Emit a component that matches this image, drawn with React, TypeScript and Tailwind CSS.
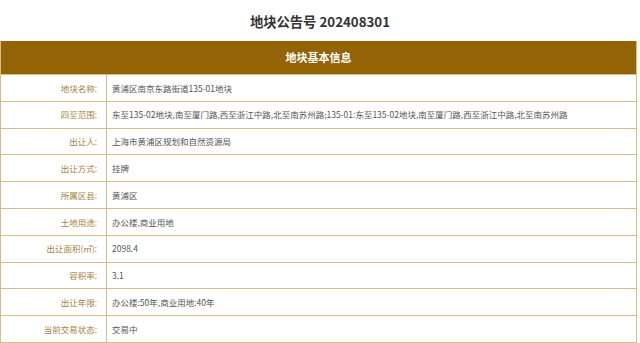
import React from 'react';

const ROWS: { label: string; value: string }[] = [
  { label: '地块名称:', value: '黄浦区南京东路街道135-01地块' },
  {
    label: '四至范围:',
    value:
      '东至135-02地块,南至厦门路,西至浙江中路,北至南苏州路;135-01:东至135-02地块,南至厦门路,西至浙江中路,北至南苏州路',
  },
  { label: '出让人:', value: '上海市黄浦区规划和自然资源局' },
  { label: '出让方式:', value: '挂牌' },
  { label: '所属区县:', value: '黄浦区' },
  { label: '土地用途:', value: '办公楼,商业用地' },
  { label: '出让面积(㎡):', value: '2098.4' },
  { label: '容积率:', value: '3.1' },
  { label: '出让年限:', value: '办公楼:50年,商业用地:40年' },
  { label: '当前交易状态:', value: '交易中' },
];

const InfoRow: React.FC<{ label: string; value: string }> = ({ label, value }) => (
  <div className="flex h-[26.8px] border-t border-[#d6bd8c]">
    <div className="w-[106px] shrink-0 flex items-center justify-end pr-[9px] border-r border-[#d6bd8c] text-[#a8823c]">
      {label}
    </div>
    <div className="flex items-center pl-[5px] text-[#555555] whitespace-nowrap">{value}</div>
  </div>
);

export default function App() {
  return (
    <div
      className="w-[640px] h-[343px] bg-white overflow-hidden text-[8.5px]"
      style={{ fontFamily: '"Noto Sans CJK SC", "Noto Sans", sans-serif' }}
    >
      <h1 className="h-[41px] flex items-center justify-center pt-[3px] text-[13.3px] font-bold text-[#333333]">
        地块公告号 202408301
      </h1>
      <div className="w-[637px] border-x border-b border-[#d6bd8c]">
        <div className="h-[33px] bg-[#936405] flex items-center justify-center text-[11px] font-bold text-white">
          地块基本信息
        </div>
        {ROWS.map((r) => (
          <InfoRow key={r.label} label={r.label} value={r.value} />
        ))}
      </div>
    </div>
  );
}
